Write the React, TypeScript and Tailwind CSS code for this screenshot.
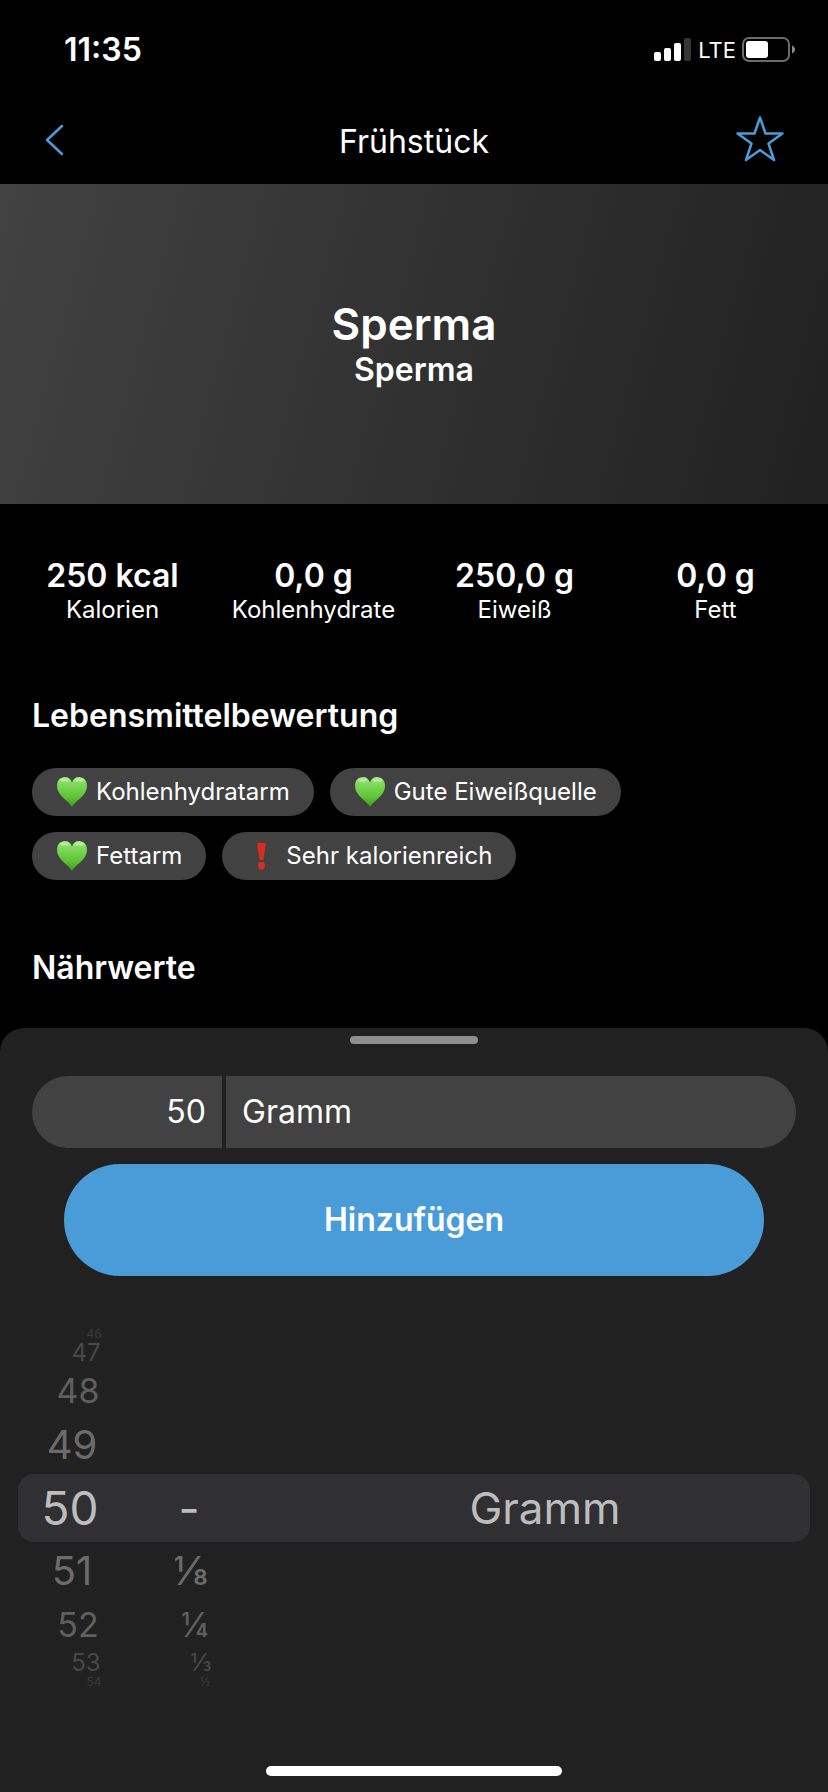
import React, { useState } from 'react';
import { clsx } from 'clsx';

const nutrients = [
  { value: '250 kcal', label: 'Kalorien' },
  { value: '0,0 g', label: 'Kohlenhydrate' },
  { value: '250,0 g', label: 'Eiweiß' },
  { value: '0,0 g', label: 'Fett' },
];

const ratings = [
  { good: true, label: 'Kohlenhydratarm' },
  { good: true, label: 'Gute Eiweißquelle' },
  { good: true, label: 'Fettarm' },
  { good: false, label: 'Sehr kalorienreich' },
];

// Rows shrink, fade and drift to the right towards the ends of the wheel
const wheelRows = [
  { whole: '46', fraction: '', unit: '', row: 'h-3 text-[12px] text-[#3a3a3a]', pad: 'pl-12', fractionPad: 'pl-8' },
  { whole: '47', fraction: '', unit: '', row: 'h-[26px] text-[24px] text-[#484848]', pad: 'pl-8', fractionPad: 'pl-6' },
  { whole: '48', fraction: '', unit: '', row: 'h-[50px] text-[34px] text-[#5f5f5f]', pad: 'pl-4', fractionPad: 'pl-3' },
  { whole: '49', fraction: '', unit: '', row: 'h-[58px] text-[40px] text-[#6b6b6b]', pad: 'pl-1', fractionPad: 'pl-1' },
  { whole: '50', fraction: '-', unit: 'Gramm', row: 'h-[68px] text-[46px] text-[#bdbdbf] bg-[#303032] rounded-2xl', pad: '', fractionPad: '' },
  { whole: '51', fraction: '⅛', unit: '', row: 'h-[58px] text-[40px] text-[#6b6b6b]', pad: 'pl-1', fractionPad: 'pl-1' },
  { whole: '52', fraction: '¼', unit: '', row: 'h-[50px] text-[34px] text-[#5f5f5f]', pad: 'pl-4', fractionPad: 'pl-3' },
  { whole: '53', fraction: '⅓', unit: '', row: 'h-[26px] text-[24px] text-[#484848]', pad: 'pl-8', fractionPad: 'pl-6' },
  { whole: '54', fraction: '½', unit: '', row: 'h-3 text-[12px] text-[#3a3a3a]', pad: 'pl-12', fractionPad: 'pl-8' },
];

function GreenHeart() {
  return (
    <svg viewBox="0 0 32 32" className="w-8 h-8" aria-hidden="true">
      <defs>
        <linearGradient id="heart" x1="0" y1="0" x2="0" y2="1">
          <stop offset="0" stopColor="#a4e58a" />
          <stop offset="0.25" stopColor="#7ed957" />
          <stop offset="0.65" stopColor="#5fc43a" />
          <stop offset="1" stopColor="#3f9a22" />
        </linearGradient>
      </defs>
      <path
        d="M16 31C14 27 9 24 5 19.500C2.500 16.500 1 13.500 1 9.500C1 4.500 4.500 1 9 1C12.500 1 15 3 16 6.500C17 3 19.500 1 23 1C27.500 1 31 4.500 31 9.500C31 13.500 29.500 16.500 27 19.500C23 24 18 27 16 31Z"
        fill="url(#heart)"
      />
      <ellipse cx="8.500" cy="4" rx="5" ry="1.800" fill="#d3f5c5" opacity="0.5" />
      <ellipse cx="23.500" cy="4" rx="5" ry="1.800" fill="#d3f5c5" opacity="0.5" />
    </svg>
  );
}

function RedMark() {
  return (
    <svg viewBox="0 0 32 32" className="w-8 h-8" aria-hidden="true">
      <path d="M11 3h9l-2.500 17h-4z" fill="#d62d20" />
      <path d="M13 22h5v1.500h1v4h-1v2h-5v-2h-1v-4h1z" fill="#d62d20" />
    </svg>
  );
}

function StatusBar() {
  return (
    <div className="flex items-center justify-between h-[100px] pl-16 pr-8">
      <span className="text-[32px] font-semibold">11:35</span>
      <div className="flex items-center gap-1.5">
        <svg viewBox="0 0 38 24" className="w-[38px] h-6" aria-hidden="true">
          <rect x="0" y="14" width="7" height="9" rx="2" fill="#fff" />
          <rect x="10" y="10" width="7" height="13" rx="2" fill="#fff" />
          <rect x="20" y="5" width="7" height="18" rx="2" fill="#fff" />
          <rect x="30" y="0" width="7" height="23" rx="2" fill="#363636" />
        </svg>
        <span className="text-[22px]">LTE</span>
        <svg viewBox="0 0 54 26" className="w-[54px] h-[26px]" aria-hidden="true">
          <rect x="1" y="1" width="46" height="23" rx="6" fill="none" stroke="#6b6b6b" strokeWidth="2" />
          <rect x="4" y="4" width="22" height="17" rx="3" fill="#fff" />
          <path d="M50 8.500c4 1.500 4 6.500 0 8z" fill="#8a8a8a" />
        </svg>
      </div>
    </div>
  );
}

function Header() {
  return (
    <header className="grid grid-cols-3 items-center h-[84px] px-10 pb-1">
      <button type="button" aria-label="Zurück" className="justify-self-start">
        <svg viewBox="0 0 32 32" className="w-8 h-8" fill="none" stroke="#4a9cd8" strokeWidth="2.500" strokeLinecap="round" strokeLinejoin="round">
          <path d="M22 2L7 16l15 14" />
        </svg>
      </button>
      <h1 className="pt-1 text-center text-[32px]">Frühstück</h1>
      <button type="button" aria-label="Favorit" className="justify-self-end">
        <svg viewBox="0 0 56 48" className="w-14 h-12" fill="none" stroke="#4a9cd8" strokeWidth="2.500" strokeLinejoin="round">
          <path d="M28 1.500L33.500 17.500H50.500L36.500 27.500L42 44L28 34L14 44L19.500 27.500L5.500 17.500H22.500Z" />
        </svg>
      </button>
    </header>
  );
}

function AmountSheet() {
  const [amount, setAmount] = useState('50');

  return (
    <section className="flex flex-col flex-1 pt-2 pb-4 bg-[#212121] rounded-t-3xl">
      <div className="w-32 h-2 mx-auto rounded-full bg-[#8f8f8f]" />
      <form className="flex flex-col gap-4 px-8 pt-8" onSubmit={(e) => e.preventDefault()}>
        <div className="flex gap-1 h-[72px] text-[32px]">
          <input
            type="text"
            inputMode="numeric"
            aria-label="Menge"
            value={amount}
            onChange={(e) => setAmount(e.target.value)}
            className="w-[190px] pr-4 text-right bg-[#424242] rounded-l-full outline-none"
          />
          <select aria-label="Einheit" className="flex-1 pl-4 bg-[#424242] rounded-r-full appearance-none outline-none">
            <option>Gramm</option>
          </select>
        </div>
        <button type="submit" className="h-28 mx-8 text-[32px] font-semibold rounded-full bg-[#4a9cd8]">
          Hinzufügen
        </button>
      </form>

      <div className="px-[18px] pt-[52px]">
        {wheelRows.map((r) => (
          <div key={r.whole} className={clsx('flex items-center leading-none', r.row)}>
            <div className={clsx('w-[104px] text-center', r.pad)}>{r.whole}</div>
            <div className={clsx('w-[134px] text-center', r.fractionPad)}>{r.fraction}</div>
            <div className="flex-1 pl-6 text-center text-[44px]">{r.unit}</div>
          </div>
        ))}
      </div>

      <div className="w-[296px] h-2.5 mx-auto mt-auto rounded-full bg-white" />
    </section>
  );
}

export default function App() {
  return (
    <div className="flex flex-col min-h-screen bg-black text-white font-['Inter',sans-serif]">
      <StatusBar />
      <Header />

      <div className="flex flex-col items-center justify-center h-80 bg-linear-[105deg] from-[#424242] to-[#212121]">
        <h2 className="text-[44px] leading-[52px] font-semibold">Sperma</h2>
        <p className="text-[32px] leading-10 font-semibold">Sperma</p>
      </div>

      <dl className="grid grid-cols-4 px-3 pt-[52px] text-center">
        {nutrients.map((n) => (
          <div key={n.label} className="flex flex-col-reverse">
            <dt className="text-2xl leading-7">{n.label}</dt>
            <dd className="text-[32px] leading-10 font-semibold">{n.value}</dd>
          </div>
        ))}
      </dl>

      <section className="px-8 pt-[72px]">
        <h3 className="text-[32px] leading-10 font-semibold">Lebensmittelbewertung</h3>
        <ul className="flex flex-wrap gap-4 pt-8 pr-32">
          {ratings.map((r) => (
            <li key={r.label} className="flex items-center gap-2 h-12 px-6 text-2xl rounded-full bg-[#424242]">
              {r.good ? <GreenHeart /> : <RedMark />}
              {r.label}
            </li>
          ))}
        </ul>
      </section>

      <section className="px-8 pt-[68px] pb-10">
        <h3 className="text-[32px] leading-10 font-semibold">Nährwerte</h3>
      </section>

      <AmountSheet />
    </div>
  );
}
